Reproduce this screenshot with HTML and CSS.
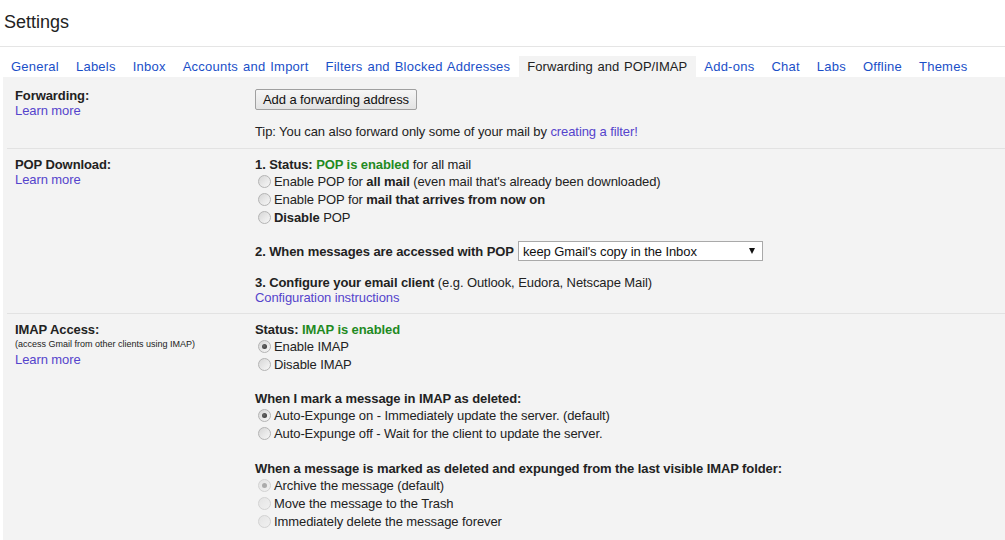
FILE: index.html
```html
<!DOCTYPE html>
<html lang="en">
<head>
<meta charset="utf-8">
<title>Settings</title>
<link rel="stylesheet" href="styles.css">
</head>
<body>
<header class="title">Settings</header>
<nav class="tabs">
  <a class="tab">General</a>
  <a class="tab">Labels</a>
  <a class="tab">Inbox</a>
  <a class="tab">Accounts and Import</a>
  <a class="tab">Filters and Blocked Addresses</a>
  <span class="tab active">Forwarding and POP/IMAP</span>
  <a class="tab">Add-ons</a>
  <a class="tab">Chat</a>
  <a class="tab">Labs</a>
  <a class="tab">Offline</a>
  <a class="tab">Themes</a>
</nav>
<main class="panel">
  <section class="row row-first">
    <div class="label">
      <div class="label-title">Forwarding:</div>
      <a class="link">Learn more</a>
    </div>
    <div class="body">
      <button class="btn">Add a forwarding address</button>
      <p class="tip">Tip: You can also forward only some of your mail by <a class="link">creating a filter!</a></p>
    </div>
  </section>

  <section class="row">
    <div class="label">
      <div class="label-title">POP Download:</div>
      <a class="link">Learn more</a>
    </div>
    <div class="body">
      <div class="line"><b>1. Status: </b><b class="ok">POP is enabled</b> for all mail</div>
      <label class="opt"><input type="radio" name="pop" class="radio">Enable POP for&nbsp;<b>all mail</b>&nbsp;(even mail that's already been downloaded)</label>
      <label class="opt"><input type="radio" name="pop" class="radio">Enable POP for&nbsp;<b>mail that arrives from now on</b></label>
      <label class="opt"><input type="radio" name="pop" class="radio"><b>Disable</b>&nbsp;POP</label>
      <div class="line select-line"><b>2. When messages are accessed with POP</b>
        <span class="select"><span>keep Gmail's copy in the Inbox</span><span class="arrow"></span></span>
      </div>
      <div class="line gap-14"><b>3. Configure your email client</b> (e.g. Outlook, Eudora, Netscape Mail)</div>
      <div class="line"><a class="link">Configuration instructions</a></div>
    </div>
  </section>

  <section class="row">
    <div class="label">
      <div class="label-title">IMAP Access:</div>
      <div class="small">(access Gmail from other clients using IMAP)</div>
      <a class="link">Learn more</a>
    </div>
    <div class="body">
      <div class="line"><b>Status: </b><b class="ok">IMAP is enabled</b></div>
      <label class="opt"><input type="radio" name="imap" class="radio" checked>Enable IMAP</label>
      <label class="opt"><input type="radio" name="imap" class="radio">Disable IMAP</label>
      <div class="line gap-18"><b>When I mark a message in IMAP as deleted:</b></div>
      <label class="opt"><input type="radio" name="exp" class="radio" checked>Auto-Expunge on - Immediately update the server. (default)</label>
      <label class="opt"><input type="radio" name="exp" class="radio">Auto-Expunge off - Wait for the client to update the server.</label>
      <div class="line gap-19"><b>When a message is marked as deleted and expunged from the last visible IMAP folder:</b></div>
      <label class="opt"><input type="radio" name="del" class="radio" checked disabled>Archive the message (default)</label>
      <label class="opt"><input type="radio" name="del" class="radio" disabled>Move the message to the Trash</label>
      <label class="opt"><input type="radio" name="del" class="radio" disabled>Immediately delete the message forever</label>
    </div>
  </section>
</main>
</body>
</html>
```
FILE: styles.css
```css
html, body {
  margin: 0;
  padding: 0;
  height: 100%;
}
body {
  font-family: "Liberation Sans", Arial, sans-serif;
  font-size: 13px;
  color: #222;
  background: #fff;
  overflow: hidden;
}
.title {
  padding: 11px 0 13px 4px;
  line-height: 22px;
  font-size: 18px;
  color: #222;
  border-bottom: 1px solid #e5e5e5;
}
.tabs {
  display: flex;
  margin-top: 9px;
  padding-left: 2.5px;
  height: 21px;
  line-height: 21px;
}
.tab {
  padding: 0 8.5px;
  color: #1a4fc8;
  white-space: nowrap;
  letter-spacing: 0.24px;
  word-spacing: 1px;
  cursor: pointer;
}
.tab.active {
  color: #222;
  background: #f3f3f3;
  letter-spacing: 0.05px;
  word-spacing: 1px;
}
.panel {
  margin-left: 3px;
  background: #f3f3f3;
  min-height: calc(100% - 77px);
  letter-spacing: -0.09px;
}
.row {
  display: grid;
  grid-template-columns: 240px 1fr;
  margin-left: 4px;
  padding: 8px 0 8px 8px;
  border-top: 1px solid #e2e2e2;
  line-height: 15px;
}
.row-first {
  border-top: none;
  padding-top: 11px;
  padding-bottom: 9px;
}
.label-title {
  font-weight: bold;
}
.link {
  color: #5544cc;
  cursor: pointer;
}
.label .link {
  display: block;
}
.small {
  font-size: 9px;
  line-height: 15px;
  letter-spacing: 0;
}
.body {
  min-width: 0;
  white-space: nowrap;
}
.btn {
  display: block;
  margin: 1px 0 0 0;
  height: 21px;
  padding: 0 7px;
  font-family: inherit;
  font-size: 13px;
  letter-spacing: -0.09px;
  color: #111;
  border: 1px solid #a0a0a0;
  border-radius: 2px;
  background: linear-gradient(#f6f6f6, #e3e3e3);
}
.tip {
  margin: 14px 0 0 0;
}
.ok {
  color: #1f8a1f;
}
.opt {
  display: flex;
  align-items: center;
  height: 18px;
}
.radio {
  -webkit-appearance: none;
  appearance: none;
  box-sizing: border-box;
  width: 13px;
  height: 13px;
  margin: 0 3px 0 3px;
  border: 1px solid #b4b4b4;
  border-radius: 50%;
  background: linear-gradient(135deg, #d6d6d6 0%, #e9e9e9 55%, #f7f7f7 100%);
  position: relative;
  flex: none;
}
.radio:checked::after {
  content: "";
  position: absolute;
  left: 3px;
  top: 3px;
  width: 5px;
  height: 5px;
  border-radius: 50%;
  background: radial-gradient(circle at 40% 40%, #6a6a6a 0%, #2e2e2e 100%);
}
.radio:disabled {
  border-color: #d2d2d2;
  background: linear-gradient(135deg, #e4e4e4, #f1f1f1);
}
.radio:disabled:checked::after {
  background: #ababab;
}
.select-line {
  display: flex;
  align-items: center;
  height: 20px;
  margin-top: 15px;
}
.select {
  box-sizing: border-box;
  display: flex;
  align-items: center;
  justify-content: space-between;
  width: 245px;
  height: 20px;
  margin-left: 4px;
  padding: 0 7px 0 4px;
  background: #fff;
  border: 1px solid #a9a9a9;
  color: #111;
}
.arrow {
  width: 0;
  height: 0;
  border-left: 3.5px solid transparent;
  border-right: 3.5px solid transparent;
  border-top: 6px solid #111;
}
.gap-14 { margin-top: 14px; }
.gap-18 { margin-top: 18px; }
.gap-19 { margin-top: 19px; }
```
